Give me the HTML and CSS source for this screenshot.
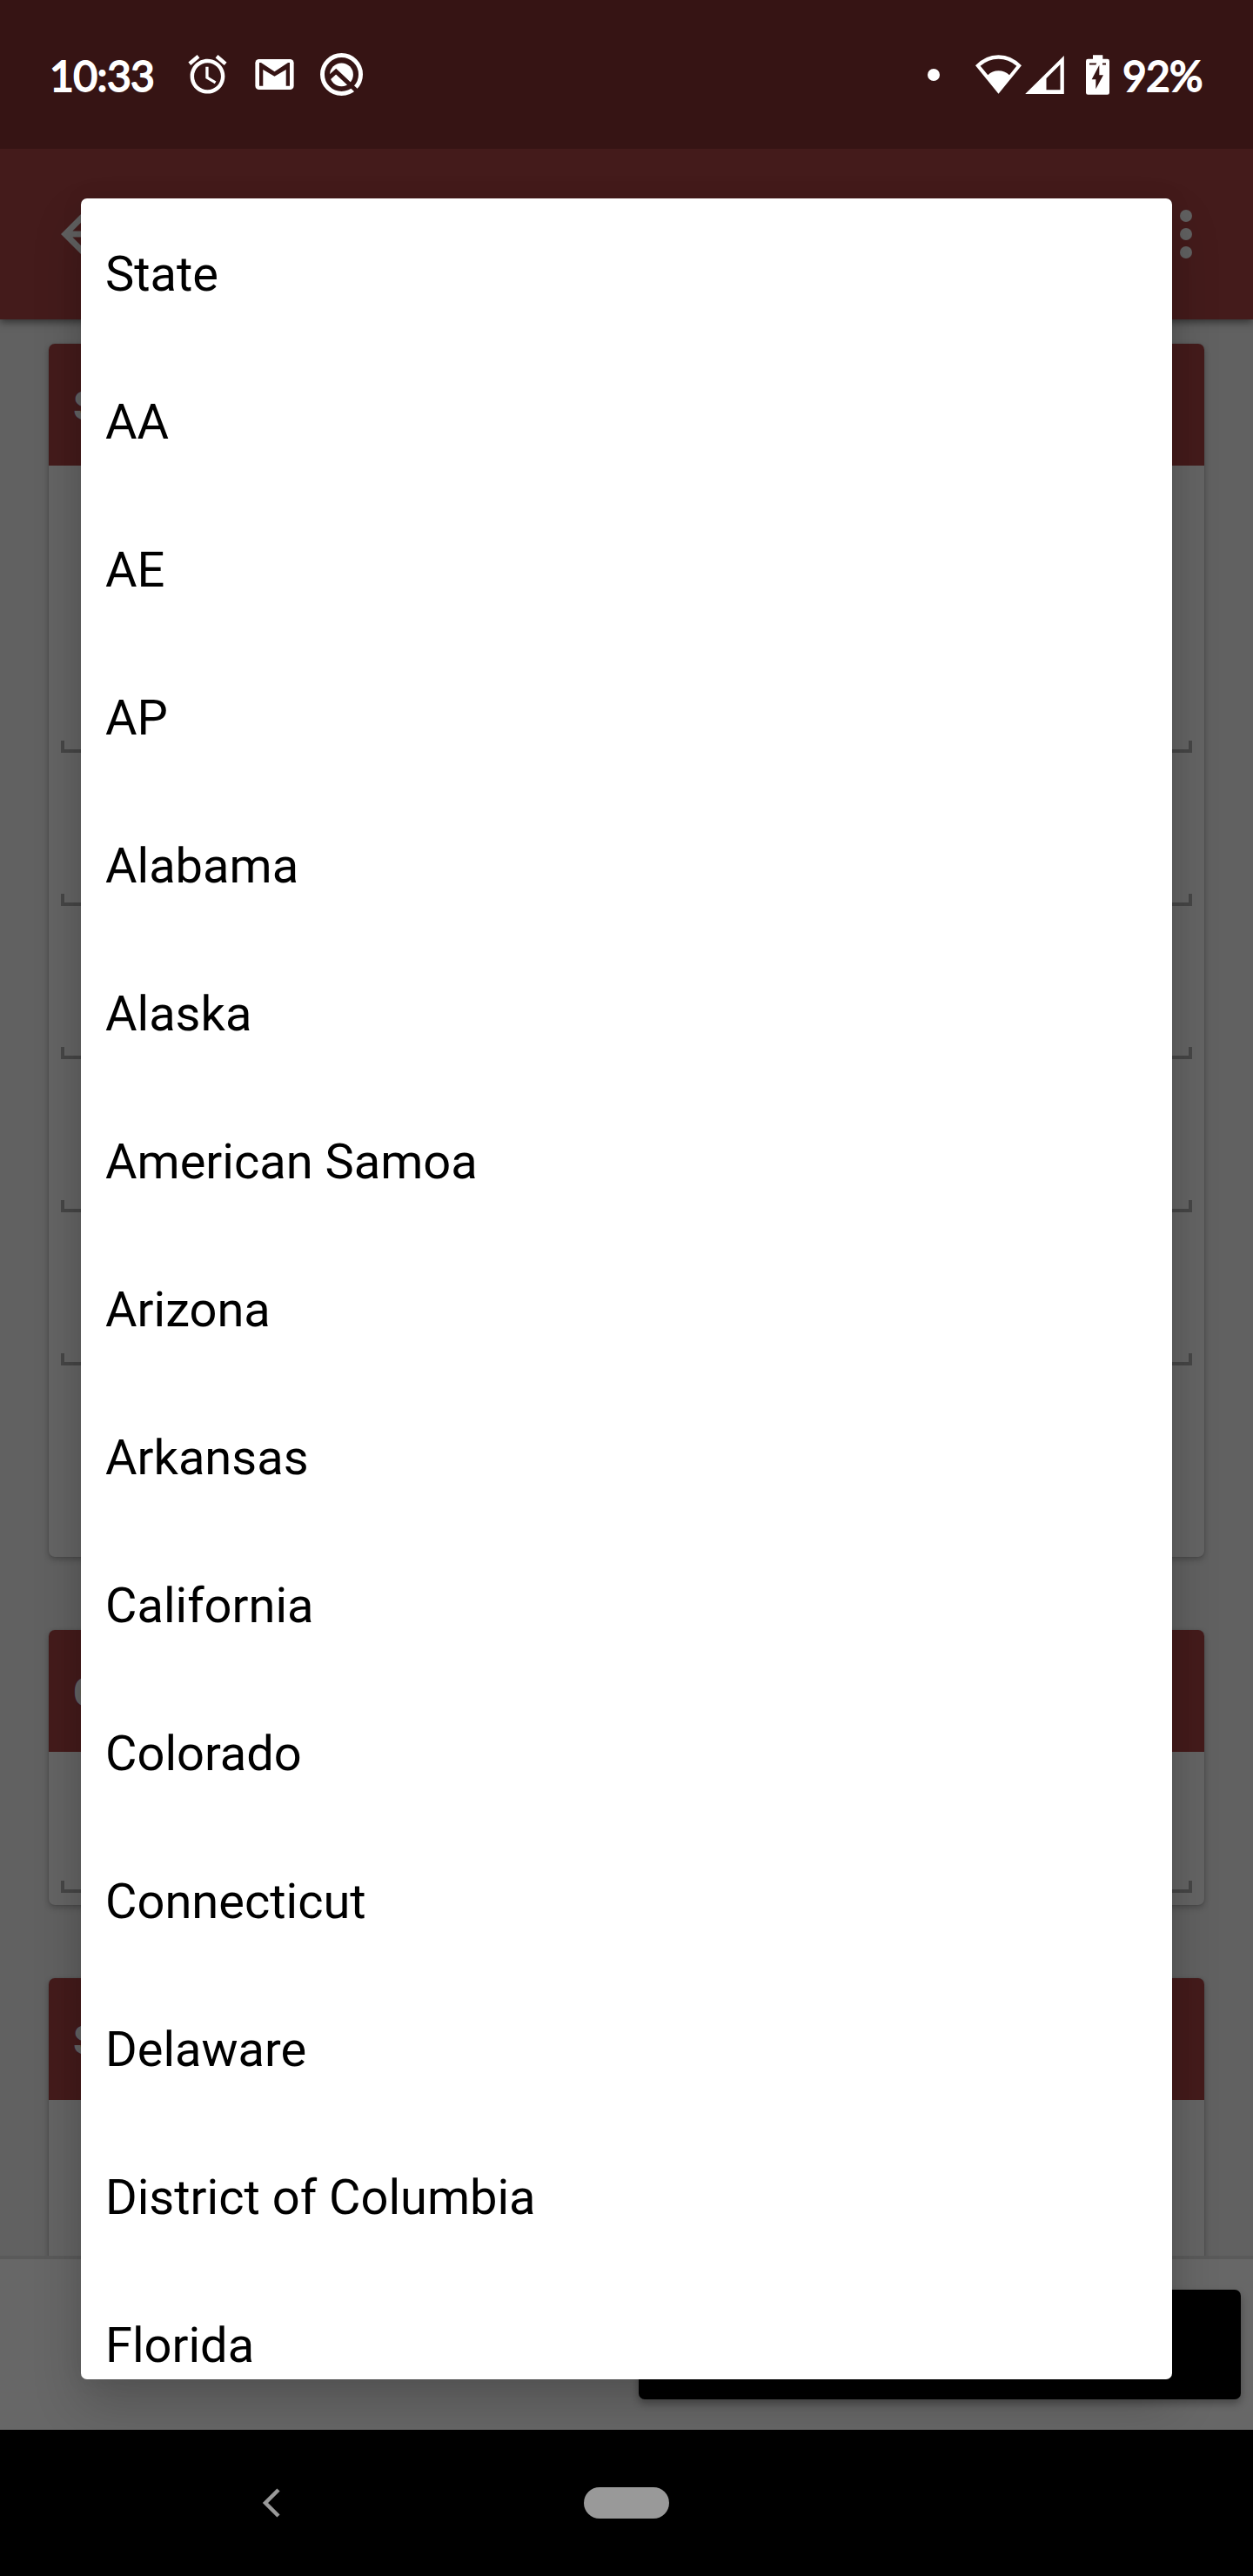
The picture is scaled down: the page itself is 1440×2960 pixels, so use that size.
FILE: index.html
```html
<!DOCTYPE html>
<html lang="en">
<head>
<meta charset="utf-8">
<title>State</title>
<link rel="stylesheet" href="styles.css">
</head>
<body>
<div class="screen">
  <header class="status">
    <span class="clock">10:33</span>
    <svg class="alarm" viewBox="0 0 24 24"><path d="M22 5.72l-4.6-3.86-1.29 1.53 4.6 3.86L22 5.72zM7.88 3.39L6.6 1.86 2 5.71l1.29 1.53 4.59-3.85zM12.5 8H11v6l4.75 2.85.75-1.23-4-2.37V8zM12 4c-4.97 0-9 4.03-9 9s4.02 9 9 9c4.97 0 9-4.03 9-9s-4.03-9-9-9zm0 16c-3.87 0-7-3.13-7-7s3.13-7 7-7 7 3.13 7 7-3.13 7-7 7z"/></svg>
    <svg class="mail" viewBox="0 0 134 106"><rect width="134" height="106" rx="13"/><path class="cut" d="M14 12H20L67 43L114 12H120V93H107V36L67 60L27 36V93H14Z"/></svg>
    <svg class="q" viewBox="0 0 148 148"><circle class="ring" cx="74" cy="74" r="66.5"/><circle cx="74" cy="75" r="40.5"/><path class="slash" d="M24 92L55 64L134 138"/></svg>
    <span class="spacer"></span>
    <svg class="dot" viewBox="0 0 14 14"><circle cx="7" cy="7" r="7"/></svg>
    <svg class="wifi" viewBox="0 0 159 134"><path d="M0 36Q34 0 79.500 0T159 36L79.500 134Z"/><path class="cut" d="M17 38Q45 14 79.500 14T142 38L117 69Q101 54 79.500 54T43 69Z"/></svg>
    <svg class="signal" viewBox="0 0 134 132"><path d="M0 132L134 0V132Z"/><path class="cut" d="M73 78L121 30V118H73Z"/></svg>
    <svg class="battery" viewBox="0 0 81 137"><path d="M24 0H58V14H74Q81 14 81 21V130Q81 137 74 137H7Q0 137 0 130V21Q0 14 7 14H24Z"/><path class="cut" d="M12 28H37L34 34H12ZM57 28H69V34H57ZM46 35V69H60L34 117V84H20Z"/></svg>
    <span class="percent">92%</span>
  </header>
  <div class="toolbar">
    <svg viewBox="0 0 24 24"><path d="M20 11H7.830l5.590-5.590L12 4l-8 8 8 8 1.410-1.410L7.830 13H20z"/></svg>
    <svg class="more" viewBox="0 0 24 24"><circle cx="12" cy="6" r="2"/><circle cx="12" cy="12" r="2"/><circle cx="12" cy="18" r="2"/></svg>
  </div>
  <main class="content">
    <section class="card first">
      <h2>S</h2>
      <div class="field tall"></div>
      <div class="field"></div>
      <div class="field"></div>
      <div class="field"></div>
      <div class="field"></div>
    </section>
    <section class="card second">
      <h2>C</h2>
      <div class="field code"></div>
    </section>
    <section class="card third">
      <h2>S</h2>
    </section>
  </main>
  <footer class="actions"><div class="button"></div></footer>
  <nav class="navbar">
    <svg class="back" viewBox="0 0 21 34"><path d="M19 2L4 17L19 32"/></svg>
    <span class="home"></span>
  </nav>
  <ul class="dialog">
    <li>State</li>
    <li>AA</li>
    <li>AE</li>
    <li>AP</li>
    <li>Alabama</li>
    <li>Alaska</li>
    <li>American Samoa</li>
    <li>Arizona</li>
    <li>Arkansas</li>
    <li>California</li>
    <li>Colorado</li>
    <li>Connecticut</li>
    <li>Delaware</li>
    <li>District of Columbia</li>
    <li>Florida</li>
  </ul>
</div>
</body>
</html>
```
FILE: styles.css
```css
*, *::after { box-sizing: border-box; }
body { margin: 0; background: #000; font-family: Roboto, sans-serif; }
svg { display: block; flex: none; }
.screen {
  position: relative;
  display: flex;
  flex-direction: column;
  width: 1440px;
  height: 2960px;
  overflow: hidden;
  background: #616161;
}

/* Status bar */
.status {
  position: relative;
  z-index: 1;
  flex: none;
  display: flex;
  align-items: center;
  height: 171px;
  padding: 0 54px 0 57px;
  background: #361414;
  color: #fff;
  fill: #fff;
  font: 400 48px/60px Lato, sans-serif;
  -webkit-text-stroke: 1.8px #fff;
}
.clock { width: 155px; margin-top: 2px; letter-spacing: -.6px; }
.percent { width: 96px; margin-top: 2px; letter-spacing: -.8px; white-space: nowrap; }
.cut { fill: #361414; }
.alarm { width: 53px; height: 53px; }
.mail { width: 45px; height: 35px; margin-left: 28px; }
.q { width: 49px; height: 49px; margin-left: 30px; }
.ring { fill: none; stroke: #fff; stroke-width: 15; }
.slash { fill: none; stroke: #361414; stroke-width: 15; }
.spacer { flex: 1; }
.dot { width: 14px; height: 14px; }
.wifi { width: 53px; height: 45px; margin-left: 41px; }
.signal { width: 45px; height: 44px; margin-left: 4px; }
.battery { width: 27px; height: 46px; margin: 0 15px 0 25px; }

/* App bar */
.toolbar {
  position: relative;
  flex: none;
  display: flex;
  justify-content: space-between;
  height: 196px;
  padding: 56px 35px 0 56px;
  background: #441b1b;
  fill: #616161;
  box-shadow: 0 3px 9px rgba(0, 0, 0, .5);
}
.toolbar svg { width: 84px; height: 84px; }

/* Form cards */
.content {
  flex: none;
  display: flex;
  flex-direction: column;
  gap: 84px;
  height: 2225px;
  padding: 28px 56px 0;
  overflow: hidden;
}
.card {
  flex: none;
  border-radius: 7px;
  background: #646464;
  box-shadow: 0 3px 7px rgba(0, 0, 0, .25), 0 0 2px rgba(0, 0, 0, .15);
}
.card h2 {
  height: 140px;
  margin: 0;
  padding-left: 28px;
  border-radius: 7px 7px 0 0;
  background: #441b1b;
  color: #646464;
  font: 700 48px/144px Roboto, sans-serif;
}
.first { height: 1394px; }
.second { height: 316px; }
.third { height: 420px; }
.field { height: 176px; padding: 162px 14px 0; }
.field.tall { height: 330px; padding-top: 316px; }
.field.code { height: 162px; padding-top: 148px; }
.field::after {
  content: "";
  display: block;
  height: 14px;
  border: solid #464646;
  border-width: 0 4px 4px;
}

/* Bottom actions */
.actions {
  flex: none;
  display: flex;
  justify-content: flex-end;
  height: 200px;
  padding: 35px 14px 0 0;
  border-top: 4px solid #5a5a5a;
  background: #676767;
}
.button {
  width: 692px;
  height: 126px;
  border-radius: 7px;
  background: #000;
  box-shadow: 0 5px 10px rgba(0, 0, 0, .32);
}

/* System navigation */
.navbar {
  flex: none;
  display: flex;
  align-items: center;
  height: 168px;
  padding-left: 301px;
  background: #000;
}
.back { width: 21px; height: 34px; fill: none; stroke: #999; stroke-width: 4.5; }
.home { width: 98px; height: 36px; margin-left: 349px; border-radius: 18px; background: #999; }

/* Dropdown list over the form */
.dialog {
  position: absolute;
  top: 228px;
  left: 93px;
  width: 1254px;
  height: 2506px;
  margin: 0;
  padding: 2px 28px 0;
  overflow: hidden;
  border-radius: 7px;
  background: #fff;
  color: #000;
  list-style: none;
  box-shadow: 0 28px 56px rgba(0, 0, 0, .19), 0 0 28px rgba(0, 0, 0, .06);
}
.dialog li { height: 170px; font-size: 56px; line-height: 170px; }
```
